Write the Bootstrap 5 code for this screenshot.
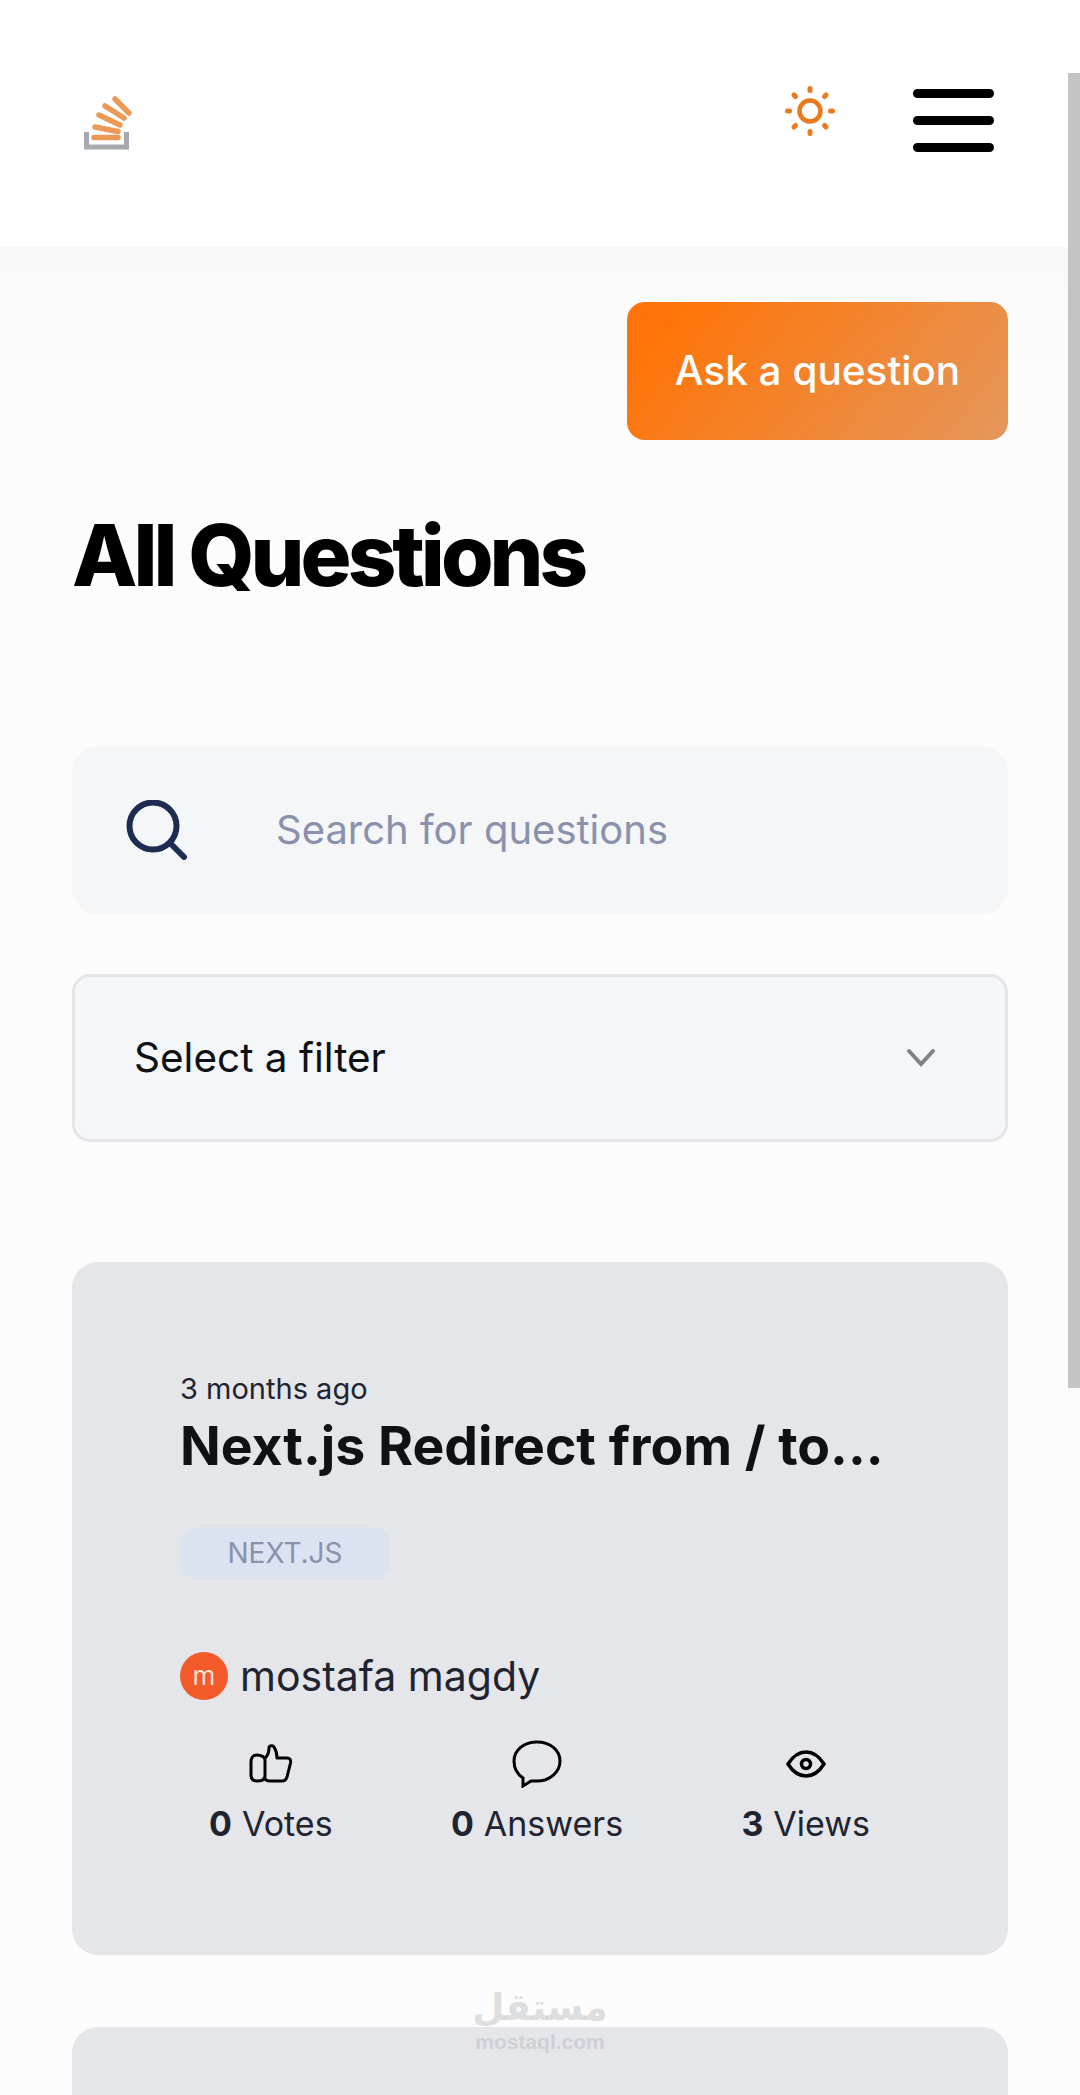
<!DOCTYPE html>
<html lang="en">
<head>
    <meta charset="UTF-8">
    <meta name="viewport" content="width=device-width, initial-scale=1.0">
    <title>All Questions</title>
    <link href="https://cdn.jsdelivr.net/npm/bootstrap@5.3.0/dist/css/bootstrap.min.css" rel="stylesheet">
    <style>
        html, body {
            height: 2095px;
            overflow: hidden;
        }
        body {
            font-family: Inter, "Noto Sans", sans-serif;
            font-variant-ligatures: none;
            background: linear-gradient(#f9f9f9 247px, #fcfcfc 400px);
            color: #1f2430;
        }
        .top-bar {
            height: 247px;
            padding: 86px 86px 0 84px;
            background: #fff;
        }
        .site-logo {
            margin-top: 8px;
            filter: blur(.5px);
        }
        .menu-btn {
            width: 81px;
            margin-left: 78px;
            gap: 18px;
            margin-top: 3px;
        }
        .menu-btn span {
            display: block;
            height: 9px;
            background: #000;
            border-radius: 5px;
        }
        .page-body {
            padding: 55px 72px 0;
        }
        .ask-btn {
            width: 381px;
            height: 138px;
            border: 0;
            border-radius: 18px;
            background: linear-gradient(129deg, #ff7408 10%, #e4975c 100%);
            color: #fff;
            font-size: 40.5px;
            font-weight: 500;
        }
        .page-title {
            margin: 60px 0 0;
            font-size: 85px;
            line-height: 112px;
            font-weight: 800;
            letter-spacing: -4px;
            color: #000;
        }
        .search-box {
            height: 168px;
            margin-top: 134px;
            padding-left: 54px;
            gap: 88px;
            border-radius: 26px;
            background: #f4f6f8;
            font-size: 40px;
            color: #8991ac;
        }
        .filter-box {
            height: 168px;
            margin-top: 60px;
            padding: 0 69px 0 59px;
            border: 3px solid #e3e5e8;
            border-radius: 18px;
            background: #f4f6f8;
            font-size: 40.5px;
            color: #0f1115;
        }
        .question-box {
            height: 693px;
            margin-top: 120px;
            padding: 109px 108px 0;
            border-radius: 26px;
            background: #e4e6ea;
        }
        .question-time {
            font-size: 29px;
            line-height: 36px;
        }
        .question-title {
            margin: 5px 0 0;
            font-size: 53.5px;
            line-height: 68px;
            font-weight: 700;
            color: #0f1115;
        }
        .tag-pill {
            width: 210px;
            height: 52px;
            margin-top: 47px;
            border-radius: 16px;
            background: #dce3f0;
            color: #8991ac;
            font-size: 28px;
        }
        .author-row {
            margin-top: 72px;
            gap: 12px;
            font-size: 41px;
            line-height: 50px;
        }
        .avatar-dot {
            width: 48px;
            height: 48px;
            border-radius: 50%;
            background: #f4592a;
            color: #fde3d8;
            font-size: 26px;
        }
        .stats-row {
            margin-top: 28px;
            padding: 0 30px 0 29px;
            font-size: 34px;
        }
        .stat-icon {
            height: 69px;
        }
        .stat-num {
            font-weight: 700;
            margin-right: 10px;
        }
        .next-box {
            height: 200px;
            margin-top: 72px;
            border-radius: 26px 26px 0 0;
            background: #e4e6ea;
        }
        .scroll-thumb {
            top: 73px;
            right: 0;
            width: 12px;
            height: 1315px;
            background: #c4c4c4;
        }
        .watermark {
            top: 1985px;
            left: 440px;
            width: 200px;
            color: rgba(170, 172, 178, .4);
            line-height: 1;
        }
        .watermark-ar {
            font-family: "DejaVu Sans", sans-serif;
            font-size: 37px;
            font-weight: 700;
            line-height: 46px;
        }
        .watermark-en {
            font-family: "Liberation Sans", sans-serif;
            font-size: 21px;
            font-weight: 700;
        }
    </style>
</head>
<body>
    <header class="top-bar d-flex align-items-start">
        <svg class="site-logo" width="50" height="56" viewBox="24 24 50 56" fill="none">
            <path d="M26.5 62V77H66.5V62" stroke="#a6a9b0" stroke-width="5"/>
            <g stroke="#ea9a55" stroke-width="5.5" stroke-linecap="round">
                <path d="M34 67.5H58"/>
                <path d="M35 57L58 61.5"/>
                <path d="M39 45L60 55"/>
                <path d="M45 36L64 48"/>
                <path d="M55 29L69 43"/>
            </g>
        </svg>
        <div class="ms-auto d-flex align-items-start">
            <svg width="50" height="50" viewBox="0 0 50 50" fill="none" stroke="#ea7a1c" stroke-linecap="round">
                <circle cx="25" cy="25" r="10.5" stroke-width="4.5"/>
                <g stroke-width="5">
                    <path d="M25 2.5V4.5"/><path d="M25 45.5V47.5"/>
                    <path d="M2.5 25H4.5"/><path d="M45.5 25H47.5"/>
                    <path d="M9 9L10.5 10.5"/><path d="M39.5 39.5L41 41"/>
                    <path d="M9 41L10.5 39.5"/><path d="M39.5 10.5L41 9"/>
                </g>
            </svg>
            <div class="menu-btn d-flex flex-column">
                <span></span><span></span><span></span>
            </div>
        </div>
    </header>

    <main class="page-body">
        <div class="d-flex justify-content-end">
            <button class="ask-btn" type="button">Ask a question</button>
        </div>
        <h1 class="page-title">All Questions</h1>

        <div class="search-box d-flex align-items-center">
            <svg width="62" height="60" viewBox="0 0 62 60" fill="none" stroke="#1f2c52" stroke-width="6" stroke-linecap="round">
                <circle cx="27" cy="26" r="23.5"/>
                <path d="M45 44L58 57"/>
            </svg>
            <span>Search for questions</span>
        </div>

        <div class="filter-box d-flex align-items-center justify-content-between">
            <span>Select a filter</span>
            <svg width="30" height="20" viewBox="0 0 30 20" fill="none" stroke="#808388" stroke-width="4" stroke-linecap="round">
                <path d="M3 3L15 16L27 3"/>
            </svg>
        </div>

        <article class="question-box">
            <div class="question-time">3 months ago</div>
            <h2 class="question-title">Next.js Redirect from / to...</h2>
            <div class="tag-pill d-flex align-items-center justify-content-center">NEXT.JS</div>
            <div class="author-row d-flex align-items-center">
                <span class="avatar-dot d-flex align-items-center justify-content-center">m</span>
                <span>mostafa magdy</span>
            </div>
            <div class="stats-row d-flex justify-content-between">
                <div class="text-center">
                    <div class="stat-icon d-flex align-items-center justify-content-center">
                        <svg width="44" height="39" viewBox="0 0 44 39" fill="none" stroke="#000" stroke-width="3" stroke-linejoin="round">
                            <path d="M8 11C4 11 2 14 2 18V31C2 35 4 37 8 37C13 37 16 36 16 32V16C16 13 12 11 8 11Z"/>
                            <path d="M15 15C19 12 20 7 20 4C20 1.5 24 1 25 3C27 6 28 10 28 14H38C41 14 42 16 41.5 19L38 33C37 36 36 37 33 37H21C18 37 16 36 15 33"/>
                        </svg>
                    </div>
                    <span class="stat-num">0</span>Votes
                </div>
                <div class="text-center">
                    <div class="stat-icon d-flex align-items-center justify-content-center">
                        <svg width="50" height="48" viewBox="0 0 50 48" fill="none" stroke="#000" stroke-width="3">
                            <path d="M11 46V38C5 34 2 28 2 21C2 10 12 2 25 2C38 2 48 10 48 21C48 32 38 41 25 41H19Z"/>
                        </svg>
                    </div>
                    <span class="stat-num">0</span>Answers
                </div>
                <div class="text-center">
                    <div class="stat-icon d-flex align-items-center justify-content-center">
                        <svg width="40" height="28" viewBox="0 0 40 28" fill="none" stroke="#000" stroke-width="3.5">
                            <path d="M2 14C7 6 13 2 20 2C27 2 33 6 38 14C33 22 27 26 20 26C13 26 7 22 2 14Z"/>
                            <circle cx="20" cy="14" r="4.5"/>
                        </svg>
                    </div>
                    <span class="stat-num">3</span>Views
                </div>
            </div>
        </article>

        <div class="next-box"></div>
    </main>

    <div class="scroll-thumb position-fixed"></div>
    <div class="watermark position-absolute text-center">
        <div class="watermark-ar" lang="ar" dir="rtl">مستقل</div>
        <div class="watermark-en">mostaql.com</div>
    </div>

    <script src="https://cdn.jsdelivr.net/npm/bootstrap@5.3.0/dist/js/bootstrap.bundle.min.js"></script>
</body>
</html>
